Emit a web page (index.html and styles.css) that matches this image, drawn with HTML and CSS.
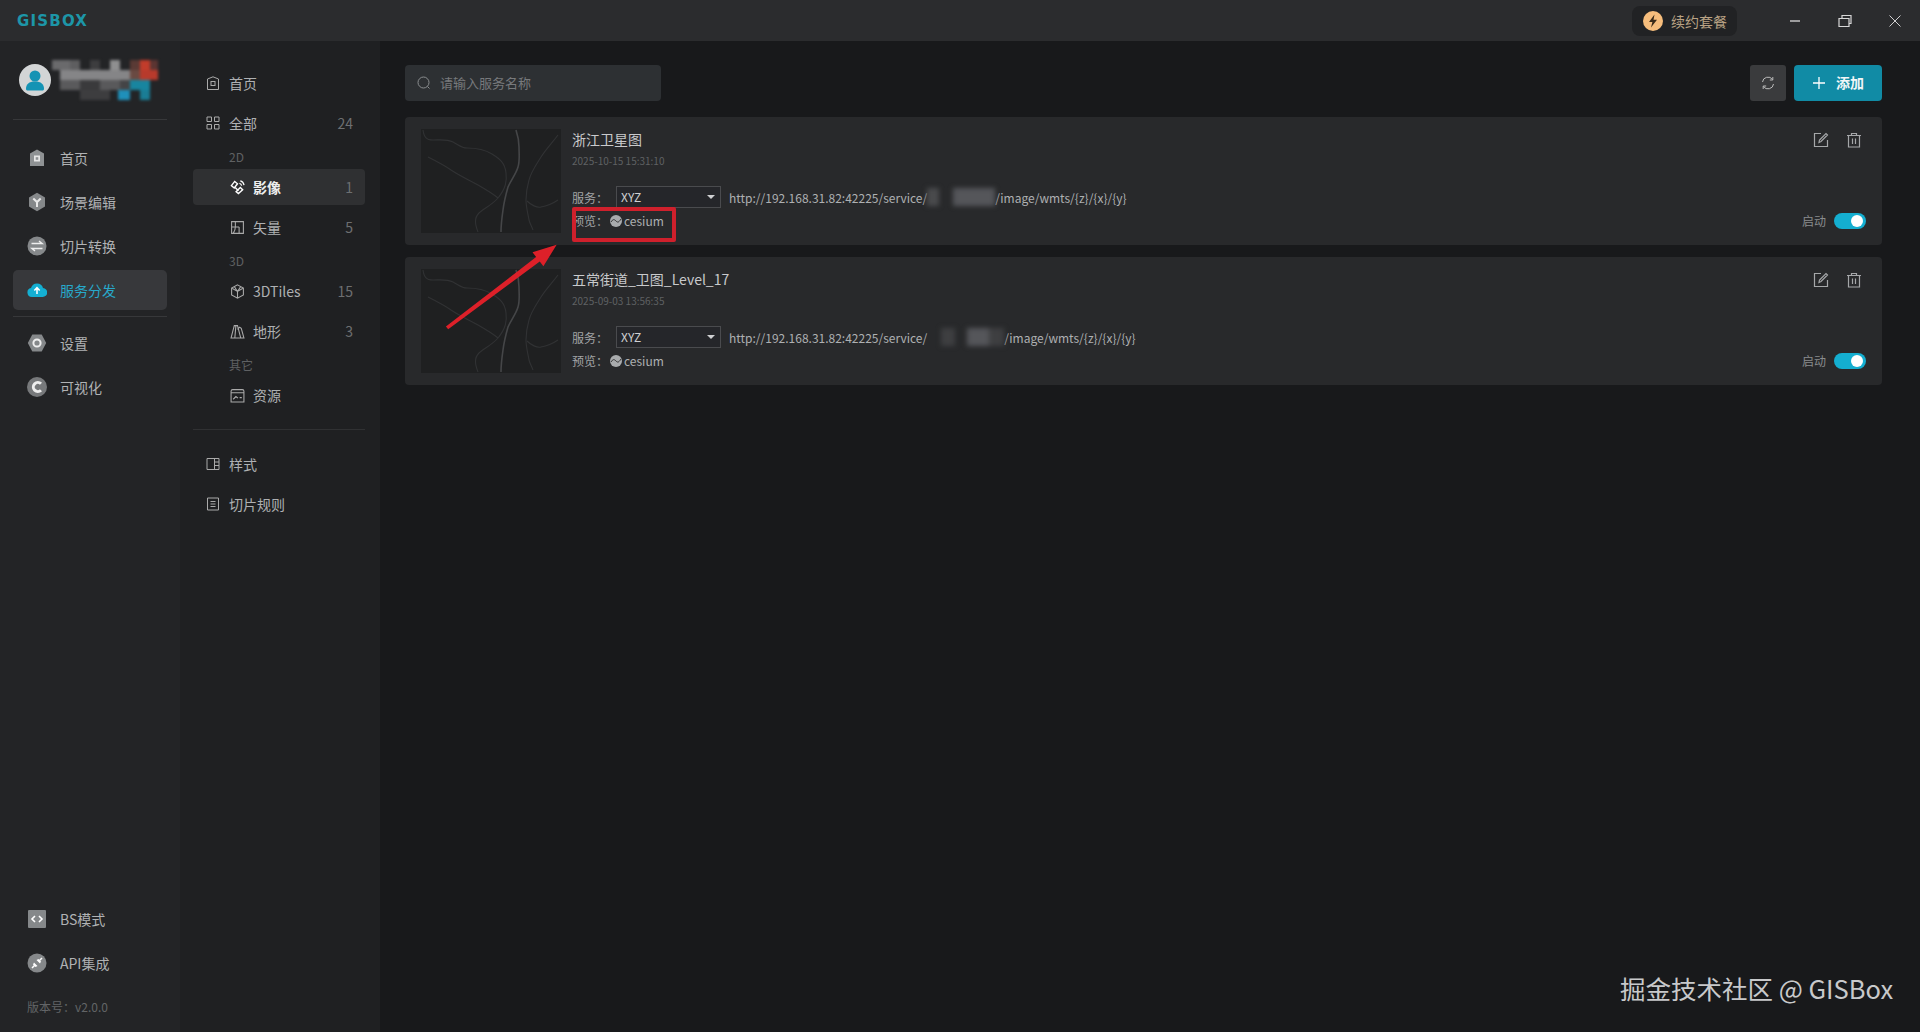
FILE: index.html
```html
<!DOCTYPE html>
<html lang="zh">
<head>
<meta charset="utf-8">
<title>GISBox</title>
<link rel="stylesheet" href="styles.css">
</head>
<body>
<div class="app">
  <header class="titlebar">
    <div class="logo">GISBOX</div>
    <div class="title-right">
      <div class="renew">
        <svg class="renew-ico" viewBox="0 0 20 20"><circle cx="10" cy="10" r="10" fill="#f6bd7c"/><path d="M11.500 3.500 6 11h3.400L8 16.500 14 8.800h-3.500z" fill="#3a2a18"/></svg>
        <span>续约套餐</span>
      </div>
      <div class="winbtns">
        <svg class="win" viewBox="0 0 16 16"><path d="M3 8h10" stroke="#e8e8e8" stroke-width="1.200"/></svg>
        <svg class="win" viewBox="0 0 16 16"><path d="M2 5.500h10v8H2zM5 5.500V2.500h9v8h-2" fill="none" stroke="#d8d8d8" stroke-width="1.200"/></svg>
        <svg class="win" viewBox="0 0 16 16"><path d="M2.500 2.500l11 11M13.500 2.500l-11 11" stroke="#d0d0d0" stroke-width="1"/></svg>
      </div>
    </div>
  </header>
  <div class="body">
    <aside class="nav">
      <div class="user">
        <svg class="avatar" viewBox="0 0 32 32"><circle cx="16" cy="16" r="16" fill="#d3d5d6"/><circle cx="16" cy="12" r="5.500" fill="#1593b4"/><path d="M7 25c0-5 3-7.500 9-7.500s9 2.500 9 7.500c0 1-1 1.500-2 1.500H9c-1 0-2-.5-2-1.500z" fill="#1593b4"/></svg>
        <svg class="mosaic" viewBox="0 0 110 42">
          <rect x="1" y="1" width="18" height="10" fill="#6a6a6c"/><rect x="19" y="1" width="10" height="10" fill="#5e5e60"/><rect x="39" y="1" width="10" height="10" fill="#3d3d3f"/><rect x="59" y="1" width="10" height="10" fill="#8f8f90"/><rect x="79" y="1" width="10" height="10" fill="#5a3a35"/><rect x="89" y="1" width="10" height="10" fill="#c23c2b"/><rect x="99" y="1" width="8" height="10" fill="#5c3532"/>
          <rect x="9" y="11" width="70" height="10" fill="#858587"/><rect x="79" y="11" width="10" height="10" fill="#6a4a42"/><rect x="89" y="11" width="18" height="10" fill="#b83a2c"/>
          <rect x="9" y="21" width="20" height="10" fill="#5a5a5c"/><rect x="29" y="21" width="20" height="10" fill="#3a3a3c"/><rect x="49" y="21" width="20" height="10" fill="#59595b"/><rect x="69" y="21" width="10" height="10" fill="#444446"/><rect x="79" y="21" width="20" height="10" fill="#18859f"/>
          <rect x="29" y="31" width="30" height="10" fill="#3d3d3f"/><rect x="67" y="31" width="12" height="10" fill="#1f90ba"/><rect x="89" y="31" width="10" height="10" fill="#1a7d95"/>
        </svg>
      </div>
      <div class="nav-rule"></div>
      <ul class="nav-list">
        <li class="nav-item"><svg class="nav-ico" viewBox="0 0 20 20"><path d="M3 5.500 10 1.500l7 4V18H3z" fill="#8f9294"/><rect x="7" y="7.500" width="6" height="6" fill="#e6e6e6"/><rect x="8.700" y="9.200" width="2.600" height="2.600" fill="#8f9294"/></svg>首页</li>
        <li class="nav-item"><svg class="nav-ico" viewBox="0 0 20 20"><path d="M10 .8 18 5.400v9.200l-8 4.600-8-4.600V5.400z" fill="#85888a"/><path d="M6.300 6.500 10 10l3.700-3.500M10 10v5" stroke="#e8e8e8" stroke-width="2" fill="none"/></svg>场景编辑</li>
        <li class="nav-item"><svg class="nav-ico" viewBox="0 0 20 20"><circle cx="10" cy="10" r="9.500" fill="#85888a"/><path d="M4.500 7.500h10.500l-3-2.500M15.500 12.500H5l3 2.500" stroke="#eee" stroke-width="1.500" fill="none"/></svg>切片转换</li>
        <li class="nav-item active"><svg class="nav-ico" viewBox="0 0 20 20"><path d="M5 17a4.500 4.500 0 0 1-1-8.900A6.200 6.200 0 0 1 16 8a4.500 4.500 0 0 1-.5 9z" fill="#14afd2"/><path d="M10 14V8M7.300 10.500 10 7.700l2.700 2.800" stroke="#fff" stroke-width="1.500" fill="none"/></svg>服务分发</li>
      </ul>
      <div class="nav-rule rule-tight"></div>
      <ul class="nav-list">
        <li class="nav-item"><svg class="nav-ico" viewBox="0 0 20 20"><path d="M5.300 1.500h9.400L19.200 10l-4.500 8.500H5.300L.8 10z" fill="#85888a"/><circle cx="10" cy="10" r="3.600" fill="none" stroke="#eee" stroke-width="2"/></svg>设置</li>
        <li class="nav-item"><svg class="nav-ico" viewBox="0 0 20 20"><circle cx="10" cy="10" r="10" fill="#77797b"/><path d="M14 6.800A4.500 4.500 0 1 0 14 13.200" fill="none" stroke="#eee" stroke-width="3"/></svg>可视化</li>
      </ul>
      <div class="nav-spacer"></div>
      <ul class="nav-list">
        <li class="nav-item"><svg class="nav-ico" viewBox="0 0 20 20"><rect x="1" y="1" width="18" height="18" rx="1" fill="#85888a"/><path d="M8 7 5 10l3 3M12 7l3 3-3 3" stroke="#fff" stroke-width="1.600" fill="none"/></svg>BS模式</li>
        <li class="nav-item"><svg class="nav-ico" viewBox="0 0 20 20"><circle cx="10" cy="10" r="9.500" fill="#85888a"/><path d="m5 15 3-3M12 8l3-3" stroke="#fff" stroke-width="1.500"/><path d="m7 9.500 3.500 3.500-2 1-2.500-2.500zM13 10.500 9.500 7l2-1 2.500 2.500z" fill="#fff"/></svg>API集成</li>
      </ul>
      <div class="version">版本号：v2.0.0</div>
    </aside>
    <aside class="sub">
      <div class="sub-row top"><svg class="sub-ico" viewBox="0 0 14 14"><path d="M1.500 3 7 .8 12.500 3v10.500h-11z" fill="none" stroke="#aaa" stroke-width="1"/><rect x="5" y="5.500" width="4" height="4" fill="none" stroke="#aaa"/></svg><span class="sub-label">首页</span></div>
      <div class="sub-row top"><svg class="sub-ico" viewBox="0 0 14 14"><path d="M1 1h4.500v4.500H1zM8.500 1H13v4.500H8.500zM1 8.500h4.500V13H1zM8.500 8.500H13V13H8.500z" fill="none" stroke="#aaa"/></svg><span class="sub-label">全部</span><span class="count">24</span></div>
      <div class="group">2D</div>
      <div class="sub-row child selected"><svg class="sub-ico wide" viewBox="0 0 16 16"><path d="m1.500 6 3.500-4.500 3 2.500-3.500 4.500zM6.500 12.500l4.500-4.500 2.500 2.500-4.500 4z" fill="none" stroke="#fff" stroke-width="1.500"/><path d="m5.500 8 3.500 3.500" stroke="#fff" stroke-width="1.500"/><path d="M11 1c2.500.5 3.500 2 4 4.500M10 3.500c1.200.3 2 1 2.500 2.500" stroke="#fff" fill="none" stroke-width="1.300"/></svg><span class="sub-label strong">影像</span><span class="count">1</span></div>
      <div class="sub-row child"><svg class="sub-ico wide" viewBox="0 0 14 14"><path d="M1.500 1.500h11v11h-11zM1.500 6.500h7M5 1.500v5M8.500 6.500V12.500M5 6.500c0 3-1 4.500-2 6" fill="none" stroke="#aaa"/></svg><span class="sub-label">矢量</span><span class="count">5</span></div>
      <div class="group">3D</div>
      <div class="sub-row child"><svg class="sub-ico wide" viewBox="0 0 14 14"><path d="M7 .8 12.500 3.800v6.400L7 13.200 1.500 10.200V3.800zM1.500 3.800 7 7l5.500-3.200M7 7v6.200M4 2.300 7 7l3-4.700" fill="none" stroke="#aaa"/></svg><span class="sub-label">3DTiles</span><span class="count">15</span></div>
      <div class="sub-row child"><svg class="sub-ico wide" viewBox="0 0 14 14"><path d="M1 13 4 1.500h3L10 13zM7 5l2-2 1.500 1L13 13h-3M5.500 1.500 4.500 13" fill="none" stroke="#aaa"/></svg><span class="sub-label">地形</span><span class="count">3</span></div>
      <div class="group">其它</div>
      <div class="sub-row child"><svg class="sub-ico wide" viewBox="0 0 14 14"><path d="M1 3c0-1 .5-1.500 1.500-1.500h9C12.500 1.500 13 2 13 3v10H1zM1 4.500h12M3 10.500l2.500-2.500 2 1.500M9 9h2" fill="none" stroke="#aaa"/></svg><span class="sub-label">资源</span></div>
      <div class="sub-rule"></div>
      <div class="sub-row top"><svg class="sub-ico" viewBox="0 0 14 14"><path d="M1 1.500h12v11H1zM8.500 1.500v11M8.500 5H13M8.500 8.500H13" fill="none" stroke="#aaa"/></svg><span class="sub-label">样式</span></div>
      <div class="sub-row top"><svg class="sub-ico" viewBox="0 0 14 14"><path d="M1.500 1h11v12h-11zM4.500 4.500h5M4.500 7h5M4.500 9.500h5" fill="none" stroke="#aaa"/></svg><span class="sub-label">切片规则</span></div>
    </aside>
    <main class="main">
      <div class="toolbar">
        <label class="search">
          <svg class="search-ico" viewBox="0 0 14 14"><circle cx="6.500" cy="6.500" r="5.500" fill="none" stroke="#8b8e90" stroke-width="1"/><path d="m10.500 10.500 2 2" stroke="#8b8e90"/></svg>
          <input class="search-input" placeholder="请输入服务名称">
        </label>
        <div class="tool-btns">
          <button class="btn-refresh"><svg viewBox="0 0 16 16"><path d="M2.500 7A5.500 5.500 0 0 1 12.500 4.500M13.500 9A5.500 5.500 0 0 1 3.500 11.500M12.800 2v3h-3M3.200 14v-3h3" fill="none" stroke="#bbb" stroke-width="1"/></svg></button>
          <button class="btn-add"><svg viewBox="0 0 14 14"><path d="M7 1v12M1 7h12" stroke="#fff" stroke-width="1.300"/></svg><span class="add-text">添加</span></button>
        </div>
      </div>
      <section class="card">
        <svg class="thumb" viewBox="0 0 140 104" preserveAspectRatio="none"><rect width="140" height="104" fill="#1f2021"/><g fill="none" stroke="#313234" stroke-width="1.100"><path d="M2 1C3 8 5 11 12 11c8 0 14-1 20 2 6 3 8 6 14 6 8 0 17 1 25 6 8 5 13 9 14 19 1 8 0 15-8 25-6 7-15 11-19 15-5 5-4 11-1 19"/><path d="M7 28c8 4 16 8 23 13 9 6 18 10 27 15 7 4 14 8 20 13"/><path d="M137 6c-6 8-12 14-17 22-5 8-10 15-12 23-2 7-3 14-3 20 0 7 2 14 3 20 1 4 3 7 4 10"/><path d="M106 72c4 4 10 7 14 6 6-1 11-3 17-7"/></g><path d="M95 1c2 6 3 11 3 17 0 7 1 14-1 20-2 7-7 13-10 20-2 7-4 15-5 23-1 7-2 15-2 22" fill="none" stroke="#454648" stroke-width="1.600"/></svg>
        <div class="card-body">
          <h2 class="card-title">浙江卫星图</h2>
          <div class="card-date">2025-10-15 15:31:10</div>
          <div class="service-row"><span class="field">服务：</span><span class="select">XYZ<i class="caret"></i></span><span class="url">http://192.168.31.82:42225/service/<i class="blur b1"></i>/image/wmts/{z}/{x}/{y}</span></div>
          <div class="preview-row"><span class="field">预览：</span><svg class="globe" viewBox="0 0 12 12"><circle cx="6" cy="6" r="6" fill="#a9abad"/><path d="M1 7c2-3 3-3 5-1s3 1 5-2" fill="none" stroke="#333" stroke-width="1"/></svg><span class="link">cesium</span></div>
        </div>
        <div class="card-side">
          <div class="card-actions">
            <svg class="act" viewBox="0 0 16 16"><path d="M8 1.500H1.500v13h13V8M6 10.500 6.500 8 13 1.500 14.500 3 8 9.500z" fill="none" stroke="#a5a7a9" stroke-width="1.200"/></svg>
            <svg class="act" viewBox="0 0 16 16"><path d="M1 3.500h14M5.500 3.500V1.500h5v2M2.500 3.500v11.500h11V3.500M6.500 6.500v5.500M9.500 6.500v5.500" fill="none" stroke="#a5a7a9" stroke-width="1.200"/></svg>
          </div>
          <div class="toggle-row"><span class="toggle-label">启动</span><span class="toggle"></span></div>
        </div>
      </section>
      <section class="card">
        <svg class="thumb" viewBox="0 0 140 104" preserveAspectRatio="none"><rect width="140" height="104" fill="#1f2021"/><g fill="none" stroke="#313234" stroke-width="1.100"><path d="M2 1C3 8 5 11 12 11c8 0 14-1 20 2 6 3 8 6 14 6 8 0 17 1 25 6 8 5 13 9 14 19 1 8 0 15-8 25-6 7-15 11-19 15-5 5-4 11-1 19"/><path d="M7 28c8 4 16 8 23 13 9 6 18 10 27 15 7 4 14 8 20 13"/><path d="M137 6c-6 8-12 14-17 22-5 8-10 15-12 23-2 7-3 14-3 20 0 7 2 14 3 20 1 4 3 7 4 10"/><path d="M106 72c4 4 10 7 14 6 6-1 11-3 17-7"/></g><path d="M95 1c2 6 3 11 3 17 0 7 1 14-1 20-2 7-7 13-10 20-2 7-4 15-5 23-1 7-2 15-2 22" fill="none" stroke="#454648" stroke-width="1.600"/></svg>
        <div class="card-body">
          <h2 class="card-title">五常街道_卫图_Level_17</h2>
          <div class="card-date">2025-09-03 13:56:35</div>
          <div class="service-row"><span class="field">服务：</span><span class="select">XYZ<i class="caret"></i></span><span class="url">http://192.168.31.82:42225/service/<i class="blur b2"></i>/image/wmts/{z}/{x}/{y}</span></div>
          <div class="preview-row"><span class="field">预览：</span><svg class="globe" viewBox="0 0 12 12"><circle cx="6" cy="6" r="6" fill="#a9abad"/><path d="M1 7c2-3 3-3 5-1s3 1 5-2" fill="none" stroke="#333" stroke-width="1"/></svg><span class="link">cesium</span></div>
        </div>
        <div class="card-side">
          <div class="card-actions">
            <svg class="act" viewBox="0 0 16 16"><path d="M8 1.500H1.500v13h13V8M6 10.500 6.500 8 13 1.500 14.500 3 8 9.500z" fill="none" stroke="#a5a7a9" stroke-width="1.200"/></svg>
            <svg class="act" viewBox="0 0 16 16"><path d="M1 3.500h14M5.500 3.500V1.500h5v2M2.500 3.500v11.500h11V3.500M6.500 6.500v5.500M9.500 6.500v5.500" fill="none" stroke="#a5a7a9" stroke-width="1.200"/></svg>
          </div>
          <div class="toggle-row"><span class="toggle-label">启动</span><span class="toggle"></span></div>
        </div>
      </section>
    </main>
  </div>
  <div class="mark-box"></div>
  <svg class="mark-arrow" viewBox="0 0 130 100"><path d="M1 93 100.400 16.400 96.400 11.200 123 3 108.400 26.600 104.400 21.400 3.500 96z" fill="#dd2029"/></svg>
  <div class="watermark">掘金技术社区 @ GISBox</div>
</div>
</body>
</html>
```
FILE: styles.css
```css
* { box-sizing: border-box; margin: 0; padding: 0; }
html, body { height: 100%; overflow: hidden; }
body { font-family: "Noto Sans CJK SC", "Noto Sans", sans-serif; background: #18191b; color: #b4b6b8; }
ul { list-style: none; }
.app { position: relative; width: 1920px; height: 1032px; display: flex; flex-direction: column; }
.titlebar { height: 41px; background: #2b2c2e; display: flex; align-items: center; justify-content: space-between; padding-left: 17px; flex: none; }
.logo { font-family: "DejaVu Sans", sans-serif; font-weight: 700; font-size: 15px; letter-spacing: 1.200px; color: #1d96a8; }
.title-right { display: flex; align-items: center; height: 100%; }
.renew { width: 105px; height: 30px; background: #212224; border-radius: 8px; display: flex; align-items: center; gap: 8px; padding-left: 11px; font-size: 14px; color: #b9a285; margin-right: 50px; }
.renew-ico { width: 20px; height: 20px; flex: none; }
.winbtns { display: flex; align-items: center; gap: 34px; padding-right: 17px; }
.win { width: 16px; height: 16px; }
.body { flex: 1; display: flex; min-height: 0; }
.nav { width: 180px; background: #232426; display: flex; flex-direction: column; padding: 18px 13px 0; flex: none; }
.user { display: flex; align-items: center; height: 42px; padding-left: 6px; }
.avatar { width: 32px; height: 32px; flex: none; }
.mosaic { width: 110px; height: 42px; flex: none; filter: blur(1.500px); }
.nav-rule { height: 1px; background: #37383a; margin-top: 18px; margin-bottom: 18px; }
.rule-tight { margin-top: 2px; margin-bottom: 6px; }
.nav-item { height: 40px; margin-bottom: 4px; display: flex; align-items: center; gap: 13px; padding-left: 14px; font-size: 14px; color: #b0b2b4; border-radius: 5px; }
.nav-ico { width: 20px; height: 20px; flex: none; }
.nav-item.active { background: #37383b; color: #27a9cb; }
.nav-spacer { flex: 1; }
.version { height: 45px; padding: 11px 0 0 14px; font-size: 12px; color: #626466; }
.sub { width: 200px; background: #1f2022; padding: 24px 15px 0 13px; flex: none; }
.sub-row { height: 36px; margin-bottom: 4px; display: flex; align-items: center; font-size: 14px; color: #aeb0b2; padding-right: 12px; border-radius: 4px; }
.sub-row.top { padding-left: 13px; }
.sub-row.child { padding-left: 37px; }
.selected { background: #2f3032; }
.sub-ico { width: 14px; height: 14px; flex: none; margin-right: 9px; }
.sub-ico.wide { width: 15px; height: 15px; margin-right: 8px; }
.sub-label { flex: 1; }
.strong { font-weight: 700; color: #eceded; }
.count { color: #6d6f71; font-size: 14px; }
.group { height: 24px; padding-left: 36px; font-size: 12px; line-height: 24px; color: #5f6163; }
.sub-rule { height: 1px; background: #303133; margin: 16px 0 16px; }
.main { flex: 1; padding: 24px 38px 0 25px; min-width: 0; }
.toolbar { display: flex; justify-content: space-between; height: 36px; margin-bottom: 16px; }
.search { width: 256px; height: 36px; background: #2d3033; border-radius: 4px; display: flex; align-items: center; gap: 9px; padding-left: 12px; }
.search-ico { width: 14px; height: 14px; flex: none; }
.search-input { flex: 1; min-width: 0; background: none; border: 0; outline: 0; padding-bottom: 2px; font: 13px "Noto Sans CJK SC", sans-serif; color: #ccc; }
.search-input::placeholder { color: #77797c; opacity: 1; }
.tool-btns { display: flex; gap: 8px; }
.btn-refresh { width: 36px; height: 36px; background: #3a3b3d; border: 0; border-radius: 3px; display: flex; align-items: center; justify-content: center; }
.btn-refresh svg { width: 16px; height: 16px; }
.btn-add { width: 88px; height: 36px; background: #118ba5; border: 0; border-radius: 4px; color: #f2f6f7; font: 700 14px "Noto Sans CJK SC", sans-serif; display: flex; align-items: center; justify-content: center; gap: 10px; }
.btn-add svg { width: 14px; height: 14px; }
.add-text { padding-bottom: 2px; }
.card { height: 128px; background: #28292b; border-radius: 4px; margin-bottom: 12px; display: flex; padding: 12px 20px 12px 16px; }
.thumb { width: 140px; height: 104px; flex: none; margin-right: 11px; filter: blur(.7px); }
.card-body { flex: 1; min-width: 0; }
.card-title { font-weight: 400; font-size: 14px; line-height: 20px; color: #c9cacc; margin-bottom: 5px; }
.card-date { font-size: 10px; line-height: 14px; color: #5f6163; margin-bottom: 18px; }
.service-row, .preview-row { display: flex; align-items: center; font-size: 12px; color: #a2a4a6; }
.service-row { height: 22px; margin-bottom: 2px; }
.preview-row { height: 21px; }
.field { width: 44px; flex: none; }
.preview-row .field { width: 38px; }
.select { position: relative; width: 105px; height: 22px; border: 1px solid #4a4b4e; background: #25262a; padding-left: 4px; line-height: 20px; color: #cfd0d2; margin-right: 8px; }
.caret { position: absolute; right: 5px; top: 8px; border: 4px solid transparent; border-top: 4px solid #cfd0d2; border-bottom: 0; }
.url { display: flex; align-items: center; color: #aeb0b2; }
.blur { display: block; height: 18px; filter: blur(2.500px); }
.b1 { width: 68px; background: linear-gradient(90deg, #4a4b4d 0 18%, transparent 18% 38%, #55565a 38% 100%); }
.b2 { width: 77px; background: linear-gradient(90deg, transparent 0 18%, #3e3f41 18% 36%, transparent 36% 52%, #55565a 52% 80%, #3e3f41 80% 100%); }
.globe { width: 12px; height: 12px; margin-right: 2px; }
.link { color: #aeb0b2; }
.card-side { width: 70px; flex: none; display: flex; flex-direction: column; justify-content: space-between; align-items: flex-end; }
.card-actions { display: flex; gap: 17px; margin-top: 3px; }
.act { width: 16px; height: 16px; }
.toggle-row { display: flex; align-items: center; gap: 8px; margin-bottom: 4px; margin-right: -4px; }
.toggle-label { font-size: 12px; color: #8a8c8e; }
.toggle { position: relative; width: 32px; height: 16px; background: #14aed0; border-radius: 8px; }
.toggle::after { content: ""; position: absolute; right: 3px; top: 2px; width: 12px; height: 12px; background: #fff; border-radius: 50%; }
.mark-box { position: absolute; left: 572px; top: 207px; width: 104px; height: 35px; border: 4px solid #cf202c; border-radius: 2px; }
.mark-arrow { position: absolute; left: 445px; top: 242px; width: 118px; height: 91px; }
.watermark { position: absolute; left: 1620px; top: 970px; font-family: "Noto Sans CJK SC", "Noto Sans", sans-serif; font-size: 25.500px; line-height: 36px; color: #c8c9cb; }
```
